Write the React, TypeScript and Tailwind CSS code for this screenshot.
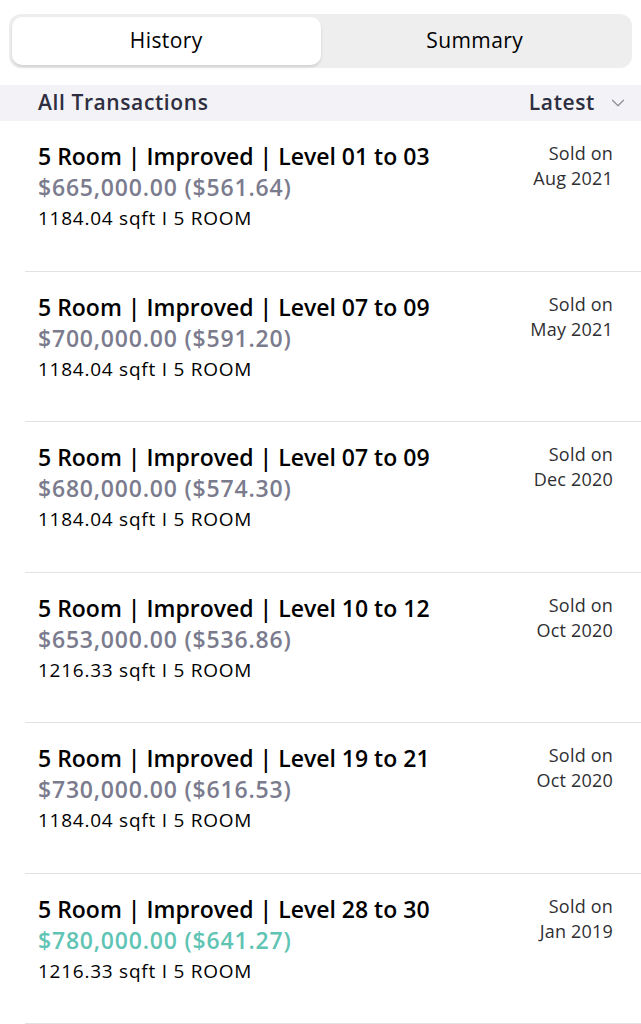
import { ChevronDown } from "lucide-react";

type Sale = {
  level: string;
  price: string;
  psf: string;
  sqft: string;
  sold: string;
  highlight?: boolean;
};

const SALES: Sale[] = [
  { level: "01 to 03", price: "$665,000.00", psf: "$561.64", sqft: "1184.04", sold: "Aug 2021" },
  { level: "07 to 09", price: "$700,000.00", psf: "$591.20", sqft: "1184.04", sold: "May 2021" },
  { level: "07 to 09", price: "$680,000.00", psf: "$574.30", sqft: "1184.04", sold: "Dec 2020" },
  { level: "10 to 12", price: "$653,000.00", psf: "$536.86", sqft: "1216.33", sold: "Oct 2020" },
  { level: "19 to 21", price: "$730,000.00", psf: "$616.53", sqft: "1184.04", sold: "Oct 2020" },
  { level: "28 to 30", price: "$780,000.00", psf: "$641.27", sqft: "1216.33", sold: "Jan 2019", highlight: true },
];

function SaleRow({ sale }: { sale: Sale }) {
  return (
    <div className="ml-[25px] flex h-[150.5px] justify-between border-b border-[#e2e2e6] pl-[13px] pr-[28px] pt-[19px]">
      <div className="min-w-0">
        <h2 className="text-[23px] font-semibold leading-[32px] text-black">
          5 Room | Improved | Level {sale.level}
        </h2>
        <p
          className={
            "text-[23px] font-semibold leading-[31px] tracking-[0.8px] " +
            (sale.highlight ? "text-[#5fc4b4]" : "text-[#7b7b8e]")
          }
        >
          {sale.price} ({sale.psf})
        </p>
        <p className="mt-[1px] text-[19px] leading-[28px] tracking-[0.75px] text-black">
          {sale.sqft} sqft I 5 ROOM
        </p>
      </div>
      <div className="text-right text-[18px] leading-[26px] tracking-[0.2px] text-[#2f2f33]">
        <p>Sold on</p>
        <p className="-mt-[1px]">{sale.sold}</p>
      </div>
    </div>
  );
}

export default function App() {
  return (
    <div className="min-h-screen w-[641px] bg-white font-['Open_Sans','Liberation_Sans',sans-serif]">
      <div className="px-[9px] pt-[14px]">
        <div className="flex h-[54px] rounded-[12px] bg-[#eeeeef] p-[3px]">
          <button
            type="button"
            className="flex-1 rounded-[10px] bg-white text-[21px] tracking-[0.4px] text-black shadow-[0_2px_3px_rgba(0,0,0,0.12)]"
          >
            History
          </button>
          <button type="button" className="flex-1 text-[21px] tracking-[0.4px] text-black">
            Summary
          </button>
        </div>
      </div>

      <div className="mt-[17px] flex h-[36px] items-center justify-between bg-[#f2f2f7] pl-[38px] pr-[12px]">
        <span className="text-[21px] font-semibold tracking-[0.6px] text-[#2e2e40]">
          All Transactions
        </span>
        <span className="flex items-center gap-[12px] text-[21px] font-semibold tracking-[0.6px] text-[#2e2e40]">
          Latest
          <ChevronDown className="h-[22px] w-[22px] text-[#8e8e9a]" strokeWidth={1.3} />
        </span>
      </div>

      {SALES.map((sale, i) => (
        <SaleRow key={i} sale={sale} />
      ))}
    </div>
  );
}
